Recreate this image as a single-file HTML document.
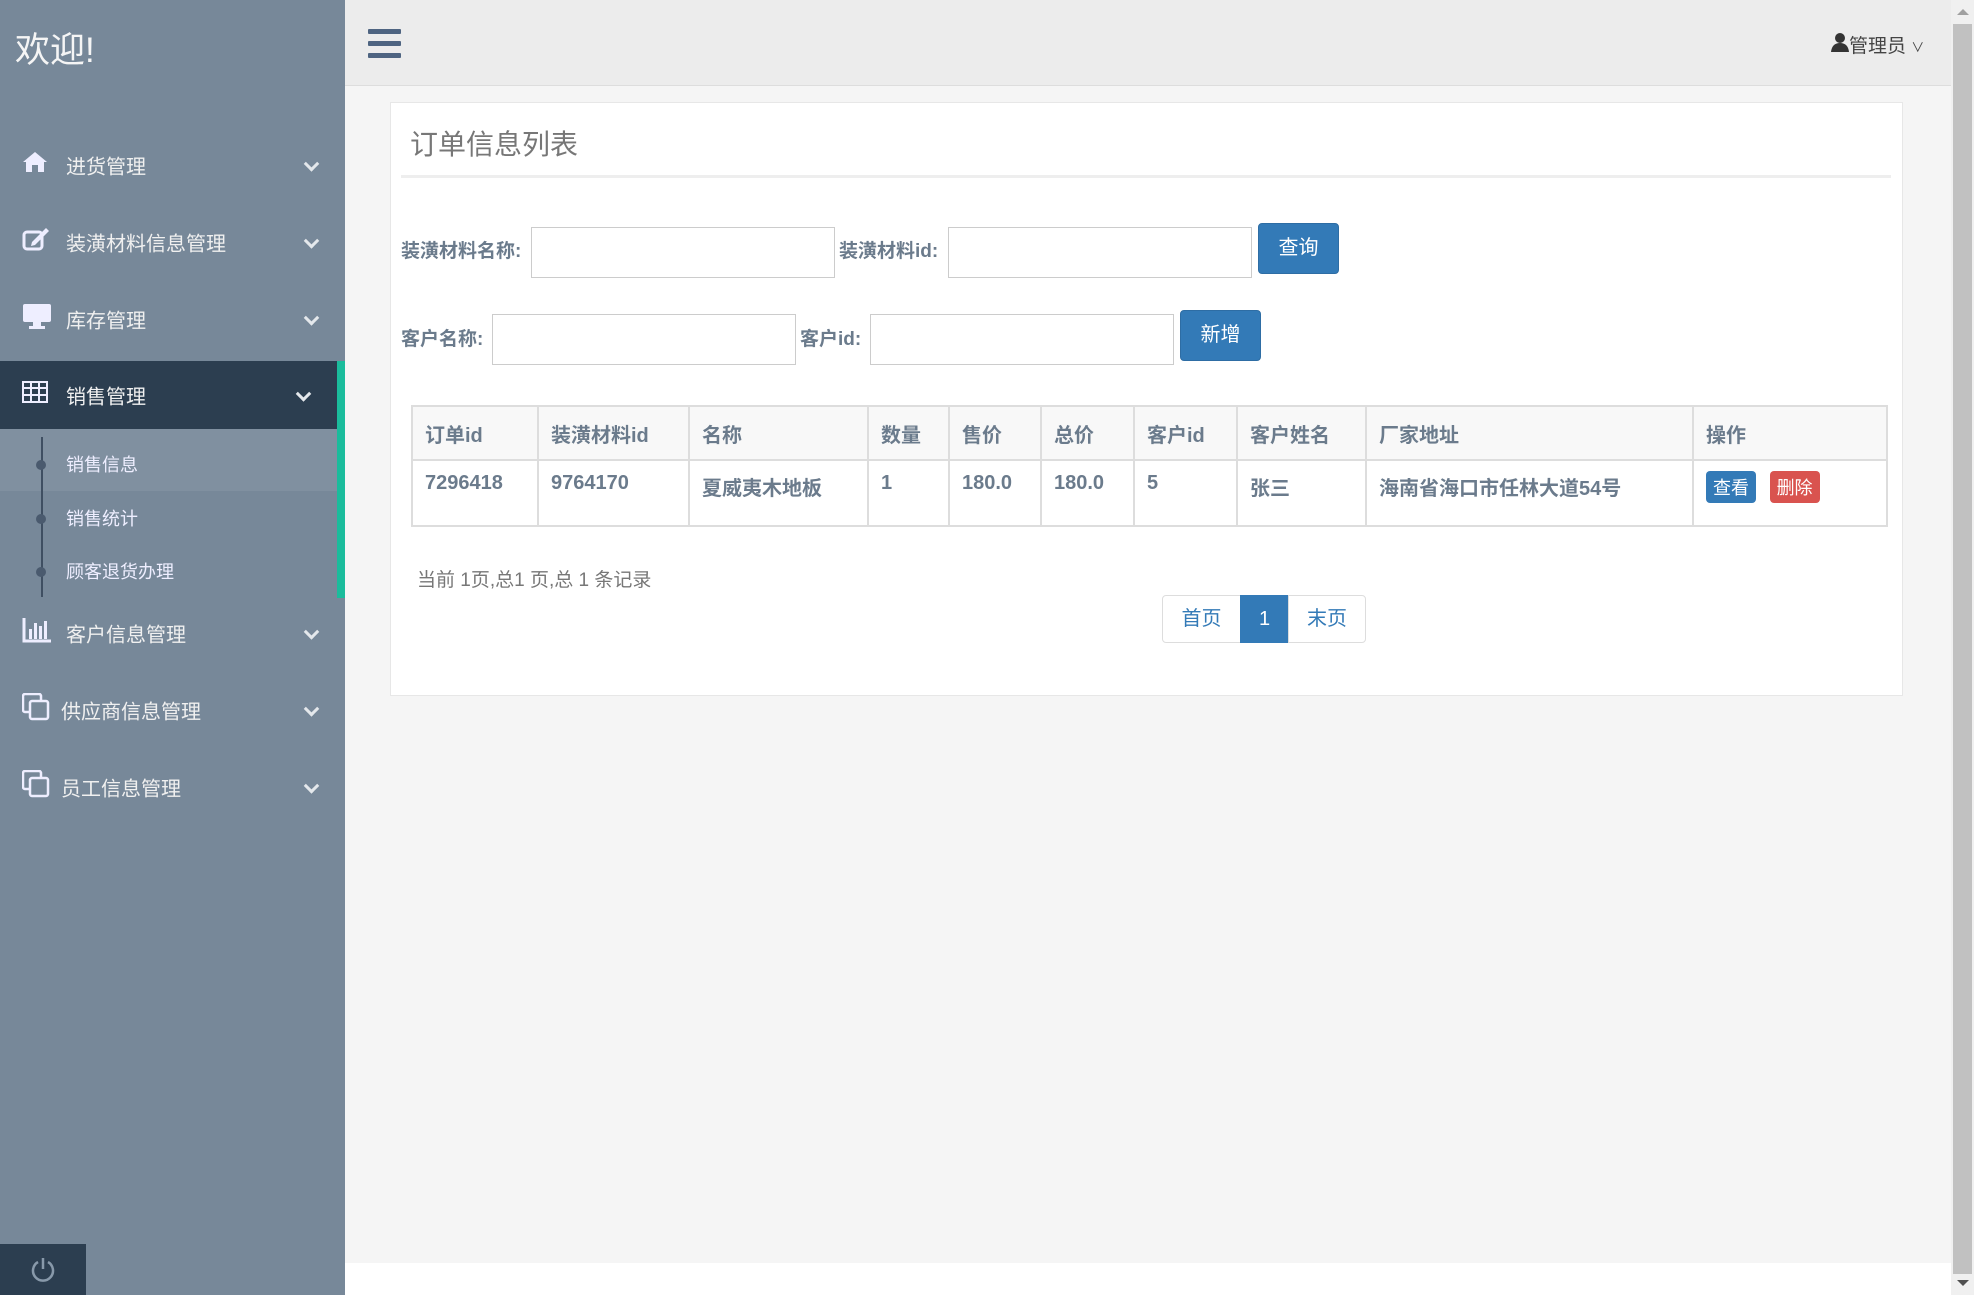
<!DOCTYPE html>
<html><head><meta charset="utf-8"><style>
*{box-sizing:border-box;margin:0;padding:0}
body{width:1974px;height:1295px;overflow:hidden;background:#f5f5f5;font-family:"Liberation Sans","Noto Sans CJK SC",sans-serif;position:relative}
.side{position:absolute;left:0;top:0;width:345px;height:1295px;background:#778899;color:#fff}
.side .wel{position:absolute;left:15px;top:22px;font-size:35px;color:#f5f5f5}
.item{position:absolute;left:0;width:345px;height:60px;font-size:20px;color:#f0f0f0}
.item .ic{position:absolute;left:22px;top:50%;transform:translateY(-50%)}
.item .tx{position:absolute;left:66px;top:50%;transform:translateY(-50%)}
.item .ch{position:absolute;right:28px;top:50%;transform:translateY(-60%) rotate(45deg);width:11px;height:11px;border-right:3px solid #e4e8ec;border-bottom:3px solid #e4e8ec}
.sub{position:absolute;left:66px;font-size:18px;color:#eef}
.dot{position:absolute;left:36px;width:10px;height:10px;border-radius:50%;background:#4a5a6e}
.main{position:absolute;left:345px;top:0;width:1606px;height:1295px}
.hdr{position:absolute;left:0;top:0;width:1606px;height:86px;background:#ececec;border-bottom:1px solid #ddd}
.panel{position:absolute;left:45px;top:102px;width:1513px;height:594px;background:#fff;border:1px solid #e7e7e7}
.lbl{position:absolute;font-size:19px;font-weight:bold;color:#6b7b8c}
.inp{position:absolute;height:51px;width:304px;border:1px solid #ccc;background:#fff}
.btn{position:absolute;height:51px;width:81px;background:#337ab7;border:1px solid #2e6da4;border-radius:4px;color:#fff;font-size:20px;text-align:center;line-height:49px}
table{position:absolute;left:20px;top:302px;width:1475px;table-layout:fixed;border-collapse:collapse;font-size:20px;font-weight:bold;color:#6b7b8c}
td,th{border:2px solid #ddd;text-align:left;padding:0 12px;font-weight:bold;white-space:nowrap;overflow:hidden}
th{height:54px;background:#f8f8f8}
td{height:66px;vertical-align:top;padding-top:11px}
.pg{position:absolute;top:492px;height:48px;border:1px solid #ddd;font-size:20px;line-height:46px;text-align:center;color:#337ab7;background:#fff}
</style></head><body>
<div class="side">
<div class="wel">欢迎!</div>
<div class="item" style="top:135px"><span class="ic"><svg width="26" height="22" viewBox="0 0 26 22"><path d="M13 1 L1 11 L4 11 L4 21 L10 21 L10 14 L16 14 L16 21 L22 21 L22 11 L25 11 Z" fill="#eef"/></svg></span><span class="tx">进货管理</span><span class="ch"></span></div>
<div class="item" style="top:212px"><span class="ic"><svg width="28" height="24" viewBox="0 0 28 24"><rect x="2" y="5" width="18" height="17" rx="3" fill="none" stroke="#eef" stroke-width="3"/><path d="M10 15 L24 1 L27 4 L13 18 L9 19Z" fill="#eef"/></svg></span><span class="tx">装潢材料信息管理</span><span class="ch"></span></div>
<div class="item" style="top:289px"><span class="ic"><svg width="30" height="26" viewBox="0 0 30 26"><rect x="1" y="1" width="28" height="18" rx="2" fill="#eef"/><rect x="11" y="19" width="8" height="5" fill="#eef"/><rect x="7" y="23" width="16" height="3" fill="#eef"/></svg></span><span class="tx">库存管理</span><span class="ch"></span></div>
<div style="position:absolute;left:0;top:361px;width:337px;height:68px;background:#2c3e50"></div>
<div style="position:absolute;left:0;top:429px;width:337px;height:62px;background:#8090a0"></div>
<div style="position:absolute;left:337px;top:361px;width:8px;height:237px;background:#1abc9c"></div>
<div class="item" style="top:365px"><span class="ic"><svg width="26" height="22" viewBox="0 0 26 22"><rect x="1" y="1" width="24" height="20" fill="none" stroke="#eef" stroke-width="2"/><path d="M1 7H25M1 14H25M9 1V21M17 1V21" stroke="#eef" stroke-width="2"/></svg></span><span class="tx">销售管理</span><span class="ch" style="right:36px"></span></div>
<div style="position:absolute;left:41px;top:437px;width:2px;height:160px;background:#3f4f62"></div>
<div class="dot" style="top:460px"></div><div class="sub" style="top:451px">销售信息</div>
<div class="dot" style="top:514px"></div><div class="sub" style="top:505px">销售统计</div>
<div class="dot" style="top:567px"></div><div class="sub" style="top:558px">顾客退货办理</div>
<div class="item" style="top:603px"><span class="ic"><svg width="30" height="26" viewBox="0 0 30 26"><path d="M2 1V24H29" fill="none" stroke="#eef" stroke-width="3"/><rect x="7" y="12" width="3" height="10" fill="#eef"/><rect x="12" y="6" width="3" height="16" fill="#eef"/><rect x="17" y="9" width="3" height="13" fill="#eef"/><rect x="22" y="4" width="3" height="18" fill="#eef"/></svg></span><span class="tx">客户信息管理</span><span class="ch"></span></div>
<div class="item" style="top:680px"><span class="ic"><svg width="28" height="28" viewBox="0 0 28 28"><rect x="1" y="1" width="18" height="18" rx="2" fill="none" stroke="#eef" stroke-width="2.5"/><rect x="8" y="8" width="18" height="18" rx="2" fill="#778899" stroke="#eef" stroke-width="2.5"/></svg></span><span class="tx" style="left:61px">供应商信息管理</span><span class="ch"></span></div>
<div class="item" style="top:757px"><span class="ic"><svg width="28" height="28" viewBox="0 0 28 28"><rect x="1" y="1" width="18" height="18" rx="2" fill="none" stroke="#eef" stroke-width="2.5"/><rect x="8" y="8" width="18" height="18" rx="2" fill="#778899" stroke="#eef" stroke-width="2.5"/></svg></span><span class="tx" style="left:61px">员工信息管理</span><span class="ch"></span></div>
<div style="position:absolute;left:0;top:1244px;width:86px;height:51px;background:#2c3e50"><svg style="position:absolute;left:30px;top:12px" width="26" height="26" viewBox="0 0 26 26"><path d="M8 6A10 10 0 1 0 18 6" fill="none" stroke="#8899aa" stroke-width="2.5"/><path d="M13 2V13" stroke="#8899aa" stroke-width="2.5"/></svg></div>
</div>
<div class="main">
<div class="hdr">
<svg style="position:absolute;left:23px;top:29px" width="33" height="29" viewBox="0 0 33 29"><rect width="33" height="5" rx="1" fill="#4e6481"/><rect y="12" width="33" height="5" rx="1" fill="#4e6481"/><rect y="24" width="33" height="5" rx="1" fill="#4e6481"/></svg>
<div style="position:absolute;left:1486px;top:31px;font-size:19px;color:#444"><svg width="18" height="20" viewBox="0 0 18 20"><circle cx="9" cy="6" r="5" fill="#333"/><path d="M0 20 Q1 11 9 11 Q17 11 18 20Z" fill="#333"/></svg>管理员 <span style="font-size:13px">&#8744;</span></div>
</div>
<div style="position:absolute;left:0;top:1263px;width:1606px;height:32px;background:#fff"></div>
<div class="panel">
<div style="position:absolute;left:19px;top:20px;font-size:28px;color:#777">订单信息列表</div>
<div style="position:absolute;left:10px;top:72px;width:1490px;height:3px;background:#eee"></div>
<div class="lbl" style="left:10px;top:133px">装潢材料名称:</div>
<div class="inp" style="left:140px;top:124px"></div>
<div class="lbl" style="left:448px;top:133px">装潢材料id:</div>
<div class="inp" style="left:557px;top:124px"></div>
<div class="btn" style="left:867px;top:120px">查询</div>
<div class="lbl" style="left:10px;top:221px">客户名称:</div>
<div class="inp" style="left:101px;top:211px"></div>
<div class="lbl" style="left:409px;top:221px">客户id:</div>
<div class="inp" style="left:479px;top:211px"></div>
<div class="btn" style="left:789px;top:207px">新增</div>
<table>
<colgroup><col style="width:126px"><col style="width:151px"><col style="width:179px"><col style="width:81px"><col style="width:92px"><col style="width:93px"><col style="width:103px"><col style="width:129px"><col style="width:327px"><col style="width:194px"></colgroup>
<tr><th>订单id</th><th>装潢材料id</th><th>名称</th><th>数量</th><th>售价</th><th>总价</th><th>客户id</th><th>客户姓名</th><th>厂家地址</th><th>操作</th></tr>
<tr><td>7296418</td><td>9764170</td><td>夏威夷木地板</td><td>1</td><td>180.0</td><td>180.0</td><td>5</td><td>张三</td><td>海南省海口市任林大道54号</td><td style="padding-top:10px"><span style="display:inline-block;background:#337ab7;color:#fff;font-weight:normal;font-size:18px;padding:3px 7px;border-radius:4px">查看</span> <span style="display:inline-block;margin-left:8px;background:#d9534f;color:#fff;font-weight:normal;font-size:18px;padding:3px 7px;border-radius:4px">删除</span></td></tr>
</table>
<div style="position:absolute;left:26px;top:462px;font-size:19px;color:#777">当前 1页,总1 页,总 1 条记录</div>
<div class="pg" style="left:771px;width:79px;border-radius:4px 0 0 4px">首页</div>
<div class="pg" style="left:849px;width:49px;background:#337ab7;border-color:#337ab7;color:#fff">1</div>
<div class="pg" style="left:897px;width:78px;border-radius:0 4px 4px 0">末页</div>
</div>
</div>
<div style="position:absolute;left:1951px;top:0;width:23px;height:1295px;background:#f0f0f0"><div style="position:absolute;left:2px;top:24px;width:19px;height:1250px;background:#c1c1c1"></div><div style="position:absolute;left:6px;top:9px;border-left:6px solid transparent;border-right:6px solid transparent;border-bottom:6px solid #a0a0a0"></div><div style="position:absolute;left:6px;top:1280px;border-left:6px solid transparent;border-right:6px solid transparent;border-top:6px solid #505050"></div></div>
</body></html>
